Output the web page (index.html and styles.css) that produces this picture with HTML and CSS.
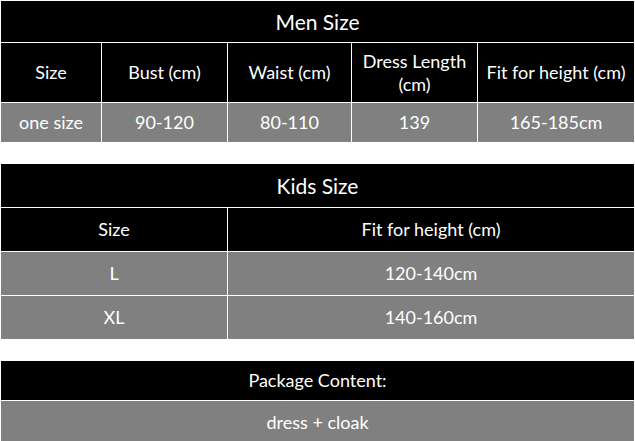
FILE: index.html
```html
<!DOCTYPE html>
<html>
<head>
<meta charset="utf-8">
<link rel="stylesheet" href="styles.css">
</head>
<body>
<div class="page">
  <table class="chart men">
    <colgroup><col class="c1"><col class="c2"><col class="c3"><col class="c4"><col class="c5"></colgroup>
    <tr class="title"><td colspan="5">Men Size</td></tr>
    <tr class="head tall"><td>Size</td><td>Bust (cm)</td><td>Waist (cm)</td><td>Dress Length<br>(cm)</td><td>Fit for height (cm)</td></tr>
    <tr class="data"><td>one size</td><td>90-120</td><td>80-110</td><td>139</td><td>165-185cm</td></tr>
  </table>
  <table class="chart kids">
    <colgroup><col class="k1"><col class="k2"></colgroup>
    <tr class="title k"><td colspan="2">Kids Size</td></tr>
    <tr class="head k"><td>Size</td><td>Fit for height (cm)</td></tr>
    <tr class="data k"><td>L</td><td>120-140cm</td></tr>
    <tr class="data k"><td>XL</td><td>140-160cm</td></tr>
  </table>
  <table class="chart pack">
    <tr class="title p"><td>Package Content:</td></tr>
    <tr class="data p2"><td>dress + cloak</td></tr>
  </table>
</div>
</body>
</html>
```
FILE: styles.css
```css
html, body {
  margin: 0;
  padding: 0;
  background: #fff;
}
.page {
  width: 635px;
  height: 441px;
  overflow: hidden;
  display: flex;
  flex-direction: column;
}
.chart {
  width: 635px;
  table-layout: fixed;
  border-collapse: separate;
  border-spacing: 1px;
  background: #fff;
  font-family: "Lato", "Open Sans", sans-serif;
  color: #fff;
  flex: none;
}
.chart td {
  padding: 0;
  text-align: center;
  vertical-align: middle;
  font-size: 18px;
  line-height: 23px;
}
.c1 { width: 100px; }
.c2 { width: 125px; }
.c3 { width: 123px; }
.c4 { width: 125px; }
.c5 { width: 156px; }
.k1 { width: 226px; }
.k2 { width: 406px; }
.title td {
  background: #000;
  font-size: 21px;
  height: 41px;
}
.head td {
  background: #000;
}
.head.tall td { height: 59px; }
.data td {
  background: #808080;
  height: 39px;
}
.kids { margin-top: 20px; }
.title.k td { height: 43px; }
.head.k td { height: 43px; }
.data.k td { height: 43px; }
.pack { margin-top: 20px; }
.title.p td { height: 39px; font-size: 18px; }
.data.p2 td { height: 42px; }
```
